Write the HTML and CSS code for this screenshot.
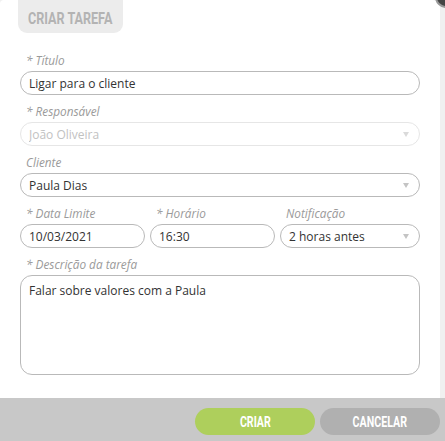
FILE: index.html
```html
<!DOCTYPE html>
<html lang="pt-br">

<head>
    <meta charset="UTF-8">
    <meta name="viewport" content="width=device-width, initial-scale=1.0">
    <title>Criar tarefa</title>
    <link rel="stylesheet" href="styles.css">
</head>

<body>
    <div class="modal">
        <span class="close"></span>
        <div class="panel">
            <div class="tab"><span class="cond">CRIAR TAREFA</span></div>

            <div class="field">
                <label>* Título</label>
                <input class="inp" type="text" value="Ligar para o cliente">
            </div>

            <div class="field">
                <label>* Responsável</label>
                <div class="select disabled">
                    <select class="inp" disabled>
                        <option>João Oliveira</option>
                    </select>
                </div>
            </div>

            <div class="field">
                <label>Cliente</label>
                <div class="select">
                    <select class="inp">
                        <option>Paula Dias</option>
                    </select>
                </div>
            </div>

            <div class="row">
                <div class="field">
                    <label>* Data Limite</label>
                    <input class="inp" type="text" value="10/03/2021">
                </div>
                <div class="field">
                    <label>* Horário</label>
                    <input class="inp" type="text" value="16:30">
                </div>
                <div class="field">
                    <label>Notificação</label>
                    <div class="select">
                        <select class="inp">
                            <option>2 horas antes</option>
                        </select>
                    </div>
                </div>
            </div>

            <div class="field">
                <label>* Descrição da tarefa</label>
                <textarea class="inp area">Falar sobre valores com a Paula</textarea>
            </div>
        </div>

        <div class="footer">
            <button class="btn ok"><span class="cond">CRIAR</span></button>
            <button class="btn cancel"><span class="cond">CANCELAR</span></button>
        </div>
    </div>
</body>

</html>
```

FILE: styles.css
```css
* {
    margin: 0;
    padding: 0;
    box-sizing: border-box;
}

body {
    background: #f0f0f0;
    font-family: "Open Sans", "Liberation Sans", sans-serif;
    width: 445px;
    height: 441px;
    overflow: hidden;
}

.modal {
    position: relative;
    padding-top: 20px;
}

.close {
    position: absolute;
    right: -12px;
    top: -14px;
    width: 22px;
    height: 22px;
    border-radius: 50%;
    background: #444;
    border: 2px solid #999;
}

.panel {
    width: 440px;
    background: #fff;
    border-radius: 4px 8px 0 0;
    padding: 0 20px 23px 20px;
}

.tab {
    display: block;
    margin-top: -20px;
    margin-left: -2px;
    height: 33px;
    width: 105px;
    background: #ececec;
    border-radius: 0 0 9px 9px;
    padding: 11px 0 0 10px;
}

.cond {
    display: inline-block;
    font-family: Roboto, "Liberation Sans", sans-serif;
    font-weight: 700;
    transform: scaleX(0.7);
    transform-origin: left center;
    white-space: nowrap;
}

.tab .cond {
    display: block;
    color: #b3b3b3;
    font-size: 17px;
    line-height: 14px;
    transform: scaleX(0.74);
}

.tab + .field {
    margin-top: 19px;
}

.field {
    margin-bottom: 8px;
}

.field label {
    display: block;
    height: 16px;
    margin-bottom: 3px;
    padding-left: 6px;
    font-size: 11.8px;
    line-height: 16px;
    font-style: italic;
    color: #9a9a9a;
}

.inp {
    display: block;
    width: 100%;
    height: 24px;
    border: 1px solid #b9b9b9;
    border-radius: 12px;
    background: #fff;
    padding: 0 8px;
    font-family: "Open Sans", "Liberation Sans", sans-serif;
    font-size: 12px;
    color: #333;
    outline: none;
    -webkit-appearance: none;
    appearance: none;
}

.select {
    position: relative;
}

.select::after {
    content: "";
    position: absolute;
    right: 11px;
    top: 10px;
    border-left: 3px solid transparent;
    border-right: 3px solid transparent;
    border-top: 5px solid #c4c4c4;
}

.select.disabled .inp {
    border-color: #dcdcdc;
    color: #a8a8a8;
}

.select.disabled::after {
    border-top-color: #dadada;
}

.row {
    display: grid;
    grid-template-columns: 125px 125px 1fr;
    gap: 5px;
}

.area {
    height: 100px;
    border-radius: 12px;
    padding: 6px 8px;
    resize: none;
    line-height: 17px;
}

.field:last-child {
    margin-bottom: 0;
}

.footer {
    background: #c8c8c8;
    height: 43px;
    padding: 10px 5px 0 0;
    display: flex;
    justify-content: flex-end;
    gap: 5px;
}

.btn {
    width: 120px;
    height: 27px;
    border: 0;
    border-radius: 14px;
    color: #fff;
    text-align: center;
}

.btn .cond {
    font-size: 14px;
    transform-origin: center;
    transform: scaleX(0.76);
}

.ok {
    background: #aecf5c;
}

.cancel {
    background: #b0b0b0;
}
```
